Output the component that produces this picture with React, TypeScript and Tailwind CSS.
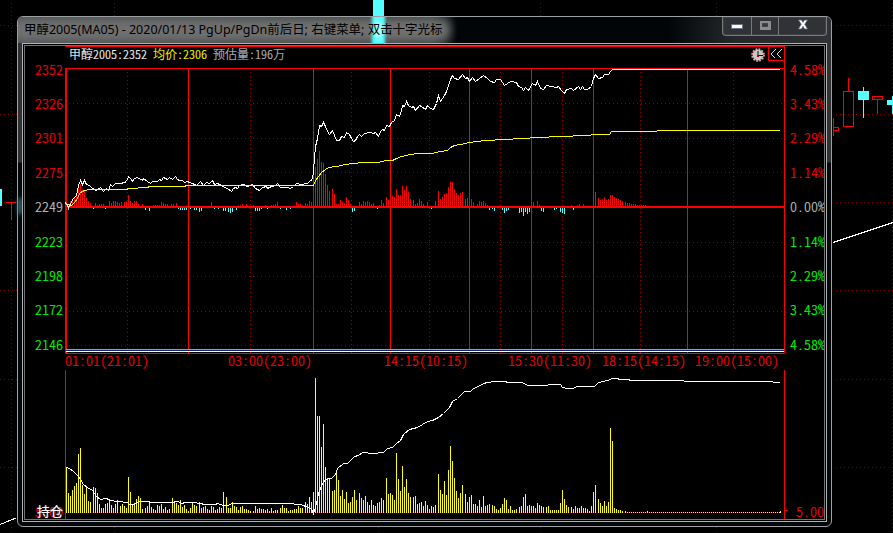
import React from "react";

type Pairs = number[];

// Bars are stored as x, y pairs in the coordinates of the 893x533 desktop.
const volume: Pairs = [
  66,467,68,493,70,496,72,490,74,486,76,483,78,454,80,448,82,485,84,494,86,487,88,501,90,502,93,487,95,488,97,493,99,504,101,508,103,508,105,504,107,503,109,499,111,505,113,508,115,504,117,500,
  120,506,122,504,124,506,126,508,128,477,130,492,132,505,134,503,136,499,138,496,140,498,142,509,145,508,147,506,149,502,151,507,153,509,155,510,157,505,159,506,161,504,163,509,165,507,167,510,169,509,
  172,498,174,502,176,503,178,505,180,500,182,507,184,505,186,509,188,511,190,508,192,503,194,505,196,506,199,502,201,508,203,507,205,506,207,509,209,510,211,506,213,507,215,510,217,509,219,507,221,508,
  223,492,226,497,228,508,230,508,232,502,234,506,236,507,238,510,240,507,242,506,244,509,246,509,248,510,250,511,253,511,255,506,257,509,259,508,261,509,263,509,265,510,267,509,269,511,271,508,273,511,275,510,277,510,
  280,508,282,505,284,508,286,508,288,511,290,510,292,510,294,509,296,509,298,506,300,508,302,508,305,502,307,504,309,497,311,502,313,492,315,378,317,416,319,416,321,447,323,424,325,467,327,478,329,478,
  332,491,334,490,336,471,338,480,340,496,342,490,344,499,346,492,348,503,350,502,352,497,354,490,356,500,359,493,361,498,363,500,365,496,367,502,369,505,371,500,373,505,375,506,377,503,379,502,381,498,383,500,
  386,478,388,494,390,493,392,495,394,500,396,453,398,479,400,491,402,466,404,487,406,479,408,493,410,497,413,497,415,496,417,504,419,503,421,502,423,506,425,501,427,505,429,509,431,506,433,507,435,505,
  438,474,440,490,442,494,444,481,446,495,448,470,450,446,452,461,454,478,456,491,458,498,460,493,462,485,465,494,467,502,469,497,471,495,473,504,475,504,477,506,479,500,481,507,483,496,485,506,487,505,489,504,
  492,505,494,506,496,509,498,510,500,508,502,504,504,498,506,500,508,509,510,506,512,510,514,510,516,509,519,507,521,506,523,497,525,494,527,506,529,505,531,506,533,506,535,508,537,503,539,505,541,506,543,507,
  546,507,548,506,550,510,552,510,554,510,556,510,558,510,560,503,562,490,564,499,566,505,568,507,571,507,573,509,575,506,577,508,579,508,581,506,583,508,585,508,587,509,589,511,591,506,593,492,595,485,
  598,499,600,503,602,506,604,501,606,506,608,502,610,428,612,441,614,508,616,509,618,510,620,510,622,511,625,511,647,511,780,511,
];
for (let x = 627; x < 780; x += 2) volume.push(x, 512);

const strength: Pairs = [
  70,201,72,199,74,197,76,195,78,187,80,184,82,190,84,191,86,198,88,201,90,203,95,203,97,205,99,204,101,204,103,204,109,201,111,203,113,201,115,201,117,202,119,203,121,202,124,202,126,201,128,195,130,201,132,203,134,201,136,201,138,204,142,204,
  153,205,155,205,157,205,159,205,161,202,163,203,165,204,167,204,171,204,173,204,176,203,211,202,238,205,240,205,242,204,246,204,253,205,265,205,271,205,273,205,275,204,277,202,
  294,205,296,202,298,204,300,204,302,205,305,203,307,204,309,201,311,202,313,180,315,167,317,159,319,151,321,162,323,163,325,174,327,185,329,191,332,189,334,194,336,204,338,204,340,200,342,202,344,203,346,197,348,200,350,204,
  359,202,361,204,363,201,365,202,367,201,369,202,371,204,373,203,379,205,381,200,383,203,386,197,388,200,392,196,394,197,396,189,398,195,400,195,402,186,404,190,406,186,408,192,410,199,413,200,415,204,417,203,419,199,421,201,423,204,427,202,435,201,
  438,191,440,199,442,197,444,194,446,193,448,187,450,182,452,182,454,189,456,193,458,195,460,193,462,192,465,199,467,198,471,199,473,202,477,204,479,201,481,202,483,201,485,203,487,205,
  533,202,537,201,539,205,571,205,577,205,579,204,583,204,595,192,598,198,600,200,602,199,604,197,606,200,608,199,610,195,612,195,614,197,616,198,618,199,620,200,622,201,625,202,627,203,629,203,631,204,633,204,635,204,637,205,639,205,641,205,643,205,645,205,
];

const weakness: Pairs = [
  68,210,93,209,105,209,145,210,149,211,178,209,180,210,182,210,184,210,186,210,190,209,194,210,196,210,199,212,201,211,214,209,218,209,223,211,225,211,228,212,230,213,232,212,236,210,
  255,211,257,211,259,211,261,209,267,209,280,209,286,210,290,209,352,212,354,211,377,209,431,209,489,210,492,209,494,211,502,210,504,213,506,211,508,210,
  519,213,521,212,523,216,525,212,527,214,529,212,541,211,543,212,554,210,556,209,560,212,562,213,564,214,573,210,
];

const price =
  "65,202 68,207 73,198 76,195 78,185 80,180 82,184 84,180 86,184 89,185 92,188 96,190 100,187 103,191 106,188 108,190 110,184 112,186 115,183 120,183 124,182 126,181 128,176 131,179 132,181 134,178 137,177 142,180 143,178 147,181 150,183 152,181 157,181 159,179 161,180 163,177 167,179 169,177 172,179 175,176 177,179 179,180 182,180 184,182 187,181 189,182 192,183 196,185 200,181 203,185 206,182 209,183 212,180 214,184 217,183 221,185 224,187 227,188 231,191 233,188 235,187 237,188 239,185 243,184 247,186 252,184 255,188 259,190 262,187 266,186 267,188 271,186 275,185 277,183 280,187 284,187 287,187 290,188 293,186 296,183 301,184 307,183 310,180 312,179 313,171 314,157 315,146 317,138 319,125 321,126 323,122 325,126 327,131 329,134 332,130 334,135 336,140 339,140 341,136 344,137 346,132 349,134 351,138 353,141 355,140 357,136 359,134 361,136 364,133 370,132 373,133 375,132 378,136 380,131 382,129 384,130 386,125 389,126 391,122 394,120 396,114 399,116 401,110 402,105 404,106 406,101 408,105 411,107 413,106 415,110 419,105 421,106 425,109 427,105 430,108 433,109 436,103 438,95 440,101 444,95 446,91 448,85 450,79 452,75 454,78 458,79 462,74 465,78 467,77 469,81 472,77 475,81 479,78 483,75 487,78 490,81 494,82 496,79 500,79 504,85 510,81 516,82 518,86 521,87 523,90 525,87 528,90 532,83 535,85 537,81 540,88 543,89 546,85 556,87 558,86 561,90 564,93 566,89 571,88 573,90 578,86 580,89 582,86 584,89 587,89 591,86 593,78 595,74 598,78 602,77 604,74 608,74 610,71 612,69 779,69";

const average =
  "65,203 71,205 75,201 80,192 84,190 90,189 126,189 128,188 147,187 149,186 184,186 186,185 313,185 315,180 318,176 321,172 325,169 328,167 336,166 345,164 353,163 363,162 377,162 386,160 392,160 396,158 401,156 410,154 418,153 431,153 440,151 447,150 450,147 454,145 460,144 469,142 476,141 486,140 503,139 523,138 536,137 561,136 585,135 597,134 609,134 611,131 656,131 657,130 779,130";

const openInterest =
  "66,467 69,468 73,471 77,475 80,479 83,484 87,487 92,490 96,496 100,499 106,498 110,500 117,501 127,502 129,504 134,504 138,501 148,501 150,502 173,502 175,501 177,501 182,503 184,502 192,502 200,503 204,504 215,504 217,503 223,505 228,505 231,503 287,503 300,504 308,507 311,509 313,513 314,510 316,503 318,493 322,483 325,479 331,478 335,474 337,468 343,463 347,463 354,456 358,455 362,452 372,453 383,452 387,448 392,447 396,443 400,440 403,434 409,429 417,427 427,421 432,420 438,417 443,413 449,407 452,401 457,398 459,396 464,391 470,391 473,388 478,386 483,383 487,382 495,381 505,381 507,382 522,382 527,385 547,385 548,384 560,384 562,387 567,388 572,388 577,386 594,386 598,382 607,380 612,378 617,378 619,379 628,379 630,380 683,380 684,381 772,381 773,382 779,382";

const cjkHalf =
  "font-['Noto_Sans_CJK_SC','Liberation_Mono',monospace] [font-feature-settings:'hwid'] font-light [-webkit-text-stroke:0.2px]";

const levels = [
  { value: "2352", percent: "4.58%", tone: "text-[#ff0000]" },
  { value: "2326", percent: "3.43%", tone: "text-[#ff0000]" },
  { value: "2301", percent: "2.29%", tone: "text-[#ff0000]" },
  { value: "2275", percent: "1.14%", tone: "text-[#ff0000]" },
  { value: "2249", percent: "0.00%", tone: "text-[#c0c0c0]" },
  { value: "2223", percent: "1.14%", tone: "text-[#00ff00]" },
  { value: "2198", percent: "2.29%", tone: "text-[#00ff00]" },
  { value: "2172", percent: "3.43%", tone: "text-[#00ff00]" },
  { value: "2146", percent: "4.58%", tone: "text-[#00ff00]" },
];

const sessions = [
  { label: "01:01(21:01)", gap: "" },
  { label: "03:00(23:00)", gap: "ml-[79px]" },
  { label: "14:15(10:15)", gap: "ml-[72px]" },
  { label: "15:30(11:30)", gap: "ml-[40px]" },
  { label: "18:15(14:15)", gap: "ml-[10px]" },
  { label: "19:00(15:00)", gap: "ml-[9px]" },
];

// One path per series: each bar is a one-pixel column between its value and the base.
function columns(data: Pairs, base: number) {
  let d = "";
  for (let i = 0; i < data.length; i += 2) {
    d += `M${data[i] + 0.5} ${data[i + 1]}V${base}`;
  }
  return d;
}

function Curve({ points, color }: { points: string; color: string }) {
  return <polyline points={points} transform="translate(.5 .5)" fill="none" stroke={color} strokeWidth="1" />;
}

function Desktop() {
  return (
    <svg className="absolute inset-0" width="893" height="533" viewBox="0 0 893 533" shapeRendering="crispEdges" fill="none">
      <g stroke="#780000" strokeDasharray="1 3">
        {[25, 114, 202, 290, 379, 467].map((y) => (
          <path key={y} d={`M0 ${y}.5H17M836 ${y}.5H893`} />
        ))}
        {[11, 114, 378, 540, 716, 892].map((x) => (
          <path key={x} d={`M${x}.5 3V533`} />
        ))}
      </g>
      <path d="M373 0h11v17h-11zM0 189h2v17h-2zM858 91h11v9h-11zM887 100h6v5h-6z" fill="#54ffff" />
      <path d="M863.5 87v31M892.5 96v18" stroke="#54ffff" />
      <path d="M6 202.5h10M11.5 202v18M848.5 78v13M843.5 91.5h10v35h-10zM872.5 96.5h10v3h-10zM877.5 99v15M833.5 118v18M833 127.5h5v3h-5" stroke="#f00" />
      <path d="M833 242.5 893 222.5M0 524.5 16 518" stroke="#fff" />
    </svg>
  );
}

function TitleBar() {
  return (
    <div className="relative flex h-[26px] items-start justify-between overflow-hidden rounded-t-[5px] bg-[linear-gradient(90deg,#4c4f51_0,#3c3f40_51%,#020508_54%,#020508_80%,#25282a_88%,#303235_100%)]">
      <div className="absolute top-[2px] left-[-8px] h-[22px] w-[440px] rounded-lg bg-[#707070] blur-[4px]" />
      <div className="absolute -top-1 left-[354px] h-9 w-[13px] bg-[#50ffff] blur-[1.5px]" />
      <div className="absolute top-[5px] left-[358px] h-4 w-[5px] bg-white opacity-80 blur-[2px]" />
      <div className="relative ml-[6px] flex h-[26px] items-center font-['Noto_Sans','Noto_Sans_CJK_SC',sans-serif] text-[12.48px] whitespace-pre text-black">
        <span>甲醇2005(MA05) - 2020/01/13 PgUp/PgDn前后日; 右键菜单; 双击十字光标</span>
      </div>
      <div className="relative mr-[4px] flex h-[19px] w-[105px] rounded-b-[4px] border border-t-0 border-[#77797c] bg-[#303235] shadow-[inset_0_0_0_1px_#3f4245]">
        <div className="flex w-[29px] items-center justify-center border-r border-[#77797c]">
          <svg width="12" height="6" viewBox="0 0 12 6" className="mt-[2px]"><path d="M.5.5h11v4H.5z" fill="#fff" stroke="#6c7085" /></svg>
        </div>
        <div className="flex w-[27px] items-center justify-center border-r border-[#77797c]">
          <svg width="12" height="10" viewBox="0 0 12 10" shapeRendering="crispEdges" className="-mt-[2px]"><path d="M2 2h8v6H2z" fill="#383a3c" stroke="#8c8c8c" strokeWidth="3" /><path d="M3.5 3.5h5v3h-5z" fill="none" stroke="#444" /></svg>
        </div>
        <div className="flex flex-1 items-center justify-center">
          <svg width="12" height="11" viewBox="0 0 12 11" className="-mt-[3px]"><path d="M1.5 1h3L6 3.3 7.500 1h3L7.800 5.200 10.500 10h-3L6 7.300 4.500 10h-3L4.200 5.200z" fill="#fff" stroke="#666b80" strokeWidth=".8" /></svg>
        </div>
      </div>
    </div>
  );
}

function HeaderStrip() {
  return (
    <div className="flex h-[22px] items-start justify-between border-t border-r border-[#ff0000]">
      <div className={`${cjkHalf} flex h-[13px] items-center gap-[6px] pl-1 text-[12px] leading-none`}>
        <span className="text-white">甲醇2005:2352</span>
        <span className="text-[#ffff00]">均价:2306</span>
        <span className="text-[#c0c0c0]">预估量:196万</span>
      </div>
      <div className="flex items-start">
        <svg width="14" height="14" viewBox="0 0 14 14" className="mt-px mr-[3px]">
          <circle cx="7" cy="7" r="6" fill="none" stroke="#a00000" />
          <circle cx="7" cy="7" r="5.4" fill="#c8c8c8" />
          <circle cx="7" cy="7" r="6" fill="none" stroke="#c8c8c8" strokeWidth="1.500" strokeDasharray="1.570 1.570" />
          <path d="M7 3v5M7 7.500h5" stroke="#111" fill="none" /><path d="M6 7h2v2H6z" fill="#b00000" />
        </svg>
        <svg width="16" height="15" viewBox="0 0 16 15" shapeRendering="crispEdges" fill="none">
          <path d="M.5 0v13.500H15" stroke="#f00" />
          <path d="M7.500 2.500 3 7l4.500 4.500M13.500 2.500 9 7l4.500 4.500" stroke="#ddd" />
        </svg>
      </div>
    </div>
  );
}

function PriceChart() {
  return (
    <svg className="block" width="720" height="286" viewBox="65 68 720 286" shapeRendering="crispEdges" fill="none">
      <g stroke="#960000" strokeDasharray="1 3">
        {[103, 138, 172, 242, 276, 311, 345].map((y) => (
          <path key={y} d={`M69 ${y}.5H784`} />
        ))}
        {[127, 250, 351, 429, 500, 562, 640, 733].map((x) => (
          <path key={x} d={`M${x}.5 72V353`} />
        ))}
      </g>
      <path d="M65 68.5H784M188.5 68V353M313.5 68V353M390.5 68V353M469.500 68V353M531.500 68V353M593.500 68V353M687.500 68V353M784.500 68V353M65 353.500H784" stroke="#f00" />
      <path d="M65 68h2v286h-2zM65 206h719v2H65z" fill="#f00" />
      <path d={columns(strength, 206)} stroke="#f00" />
      <path d={columns(weakness, 208)} stroke="#54ffff" />
      <Curve points={price} color="#fff" />
      <Curve points={average} color="#ff0" />
      <path d="M66 349.500H784" stroke="#a0a0a0" />
      <path d="M66 350.500H784" stroke="#0a246a" />
      <path d="M66 351.500H784" stroke="#fff" />
    </svg>
  );
}

function VolumeChart() {
  return (
    <svg className="block" width="720" height="149" viewBox="65 370 720 149" shapeRendering="crispEdges" fill="none">
      <path d="M65.500 370V519M784.500 370V519" stroke="#f00" />
      <path d="M66 512.500H780" stroke="#400000" />
      <path d={columns(volume, 513)} stroke="#ff0" />
      <Curve points={openInterest} color="#fff" />
    </svg>
  );
}

export default function App() {
  return (
    <div className="relative h-[533px] w-[893px] overflow-hidden bg-black">
      <Desktop />
      <div className="absolute top-4 left-[17px] flex h-[511px] w-[815px] flex-col rounded-[6px] border border-[#9da0a2] bg-[linear-gradient(180deg,#303234_0,#303234_145px,#05080a_146px,#05080a_100%)]">
        <TitleBar />
        <div className="absolute top-[181px] left-0 h-4 w-1 bg-[#397c88] blur-[2px]" />
        <div className="relative mx-[4px] flex h-[479px] border border-[#b0b2b4] bg-black p-px">
          <div className="flex h-[475px] w-[801px] overflow-hidden border border-[#707274]">
            <div className={`${cjkHalf} flex w-10 flex-col pt-[5.500px] pl-[10px] text-[14px] leading-none`}>
              {levels.map((l) => (
                <div key={l.value} className={`flex h-[34.500px] items-center ${l.tone}`}>{l.value}</div>
              ))}
              <div className="relative mt-[142px] flex h-[16px] items-center text-[#ff0000]">
                5.00
                <span className="absolute left-[2px] text-[13px] font-normal text-white">持仓</span>
              </div>
            </div>
            <div className="w-[720px]">
              <HeaderStrip />
              <PriceChart />
              <div className={`${cjkHalf} flex h-4 items-start text-[14px] leading-[12px] text-[#ff0000]`}>
                {sessions.map((s) => (
                  <span key={s.label} className={`w-[84px] ${s.gap}`}>{s.label}</span>
                ))}
              </div>
              <VolumeChart />
            </div>
            <div className={`${cjkHalf} flex w-[39px] flex-col pt-[5.500px] text-[14px] leading-none`}>
              {levels.map((l) => (
                <div key={l.value} className={`flex h-[34.500px] items-center pl-[5px] ${l.tone}`}>{l.percent}</div>
              ))}
              <div className="mt-[142px] flex h-[16px] items-center text-[#ff0000]">
                <span className="h-px w-[3px] bg-[#ff0000]" />
                <span className="ml-[8px]">5.00</span>
              </div>
            </div>
          </div>
        </div>
      </div>
    </div>
  );
}
